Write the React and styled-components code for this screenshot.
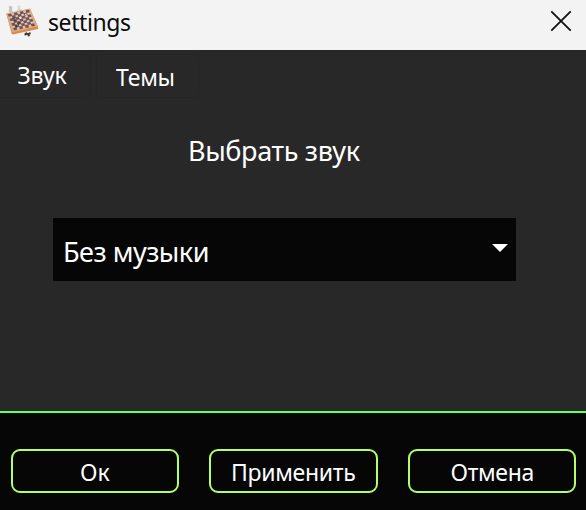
import React from 'react';
import styled, { createGlobalStyle } from 'styled-components';

const GlobalStyle = createGlobalStyle`
  * { box-sizing: border-box; }
  body { margin: 0; background: #282828; overflow: hidden; }
  button { font: inherit; color: inherit; padding: 0; border: 0; background: none; }
`;

const Window = styled.main`
  display: flex;
  flex-direction: column;
  width: 586px;
  height: 510px;
  background: #282828;
  color: #fff;
  font-family: 'Noto Sans', 'Open Sans', sans-serif;
`;

const TitleBar = styled.header`
  display: flex;
  align-items: flex-start;
  height: 50px;
  padding: 5px 14px 0 5px;
  background: #f3f3f3;
  color: #0b0b0b;
`;

const Label = styled.span`
  font-size: ${(p) => p.$size}px;
  line-height: 30px;
  letter-spacing: ${(p) => p.$spacing || 0}px;
  white-space: nowrap;
`;

const Title = styled.h1`
  flex: 1;
  display: flex;
  margin: 2px 0 0 9px;
  font-weight: 400;
`;

const CloseButton = styled.button`
  display: flex;
  margin-top: 5px;
`;

const Tabs = styled.nav`
  display: flex;
  gap: 5px;
  height: 50px;
  padding-top: 4px;
`;

const Tab = styled.button`
  display: flex;
  width: ${(p) => p.$width}px;
  height: 44px;
  padding: ${(p) => p.$top}px 0 0 ${(p) => p.$left}px;
  border: 1px solid #252525;
  border-left-width: ${(p) => (p.$first ? 0 : 1)}px;
  border-radius: ${(p) => (p.$first ? '0 5px 5px 0' : '5px')};
`;

const Content = styled.section`
  flex: 1;
  display: flex;
  flex-direction: column;
`;

const Heading = styled.h2`
  display: flex;
  height: 30px;
  margin: 36px 0 0 188px;
  font-weight: 400;
`;

const Select = styled.button`
  display: flex;
  align-items: flex-start;
  justify-content: space-between;
  width: 463px;
  height: 63px;
  margin: 52px 0 0 53px;
  padding: 19px 8px 0 10px;
  background: #060606;
`;

const Arrow = styled.svg`
  margin-top: 7px;
`;

const Footer = styled.footer`
  display: flex;
  gap: 30px;
  height: 99px;
  padding: 36px 10px 0 11px;
  border-top: 2px solid #66ff66;
  background: #060606;
`;

const ActionButton = styled.button`
  display: flex;
  width: ${(p) => p.$width}px;
  height: 44px;
  padding: 6px 0 0 ${(p) => p.$left}px;
  border: 2px solid #b3ff66;
  border-radius: 9px;
`;

const squares = [];
for (let r = 0; r < 7; r += 1) {
  for (let c = 0; c < 7; c += 1) {
    if ((r + c) % 2 === 0) squares.push([c, r]);
  }
}

function ChessIcon() {
  return (
    <svg width="34" height="34" viewBox="0 0 34 34">
      <g fill="#c4c4c3">
        <circle cx="5.5" cy="2.4" r="1.7" />
        <path d="M4.3 3h2.6l.8 4H3.5z" />
        <circle cx="14" cy="2" r="1.7" fill="#dededd" />
        <path d="M13 3h2.2l1.6 3h-5z" fill="#d5d5d4" />
      </g>
      <path d="M1.2 8.5L6.6 28.2l1 1.4L33 24V21.5L25 3.7z" fill="#d58a4e" />
      <path d="M1.2 8.5L24.8 3.4 33 21.6 7.4 27.2z" fill="#dfac82" />
      <g transform="matrix(2.95 -.64 .86 2.28 3.1 9.3)">
        <rect width="7" height="7" fill="#dcc2ae" />
        {squares.map(([x, y]) => (
          <rect key={`${x}-${y}`} x={x - 0.06} y={y - 0.06} width="1.12" height="1.12" fill="#745057" />
        ))}
      </g>
      <g fill="#38383b">
        <path d="M8 13l2-1 1 4-2 1zM13 16l2 1-1 3-2-1zM9.5 20l2-.5.8 2.9-2 .5z" opacity=".8" />
        <path d="M19.5 28.3l2-1 1.4 1 2.4-1.3.5 2-1.4.8.8 1.2-1.9.5-1.1-1.7-2.5 1z" />
      </g>
      <path d="M14 13l1.3-2 .8 3zM20 10l1-2 1 2.5z" fill="#f1eeea" />
    </svg>
  );
}

export default function App() {
  return (
    <>
      <GlobalStyle />
      <Window>
        <TitleBar>
          <ChessIcon />
          <Title><Label $size={23} $spacing={-0.4}>settings</Label></Title>
          <CloseButton aria-label="Close">
            <svg width="22" height="22" viewBox="0 0 22 22">
              <path d="M1.3 1.3L20.7 20.7M20.7 1.3L1.3 20.7" stroke="#111" strokeWidth="1.8" />
            </svg>
          </CloseButton>
        </TitleBar>
        <Tabs>
          <Tab $width={91} $left={17.5} $top={5} $first><Label $size={23} $spacing={-0.2}>Звук</Label></Tab>
          <Tab $width={103} $left={19} $top={7}><Label $size={23} $spacing={-0.2}>Темы</Label></Tab>
        </Tabs>
        <Content>
          <Heading><Label $size={27} $spacing={-0.35}>Выбрать звук</Label></Heading>
          <Select>
            <Label $size={27} $spacing={-0.5}>Без музыки</Label>
            <Arrow width="16" height="8" viewBox="0 0 16 8"><path d="M0 0h16L8 8z" fill="#fff" /></Arrow>
          </Select>
        </Content>
        <Footer>
          <ActionButton $width={168} $left={67}><Label $size={23}>Ок</Label></ActionButton>
          <ActionButton $width={169} $left={20}><Label $size={23} $spacing={-0.3}>Применить</Label></ActionButton>
          <ActionButton $width={168} $left={40.5}><Label $size={23} $spacing={-0.35}>Отмена</Label></ActionButton>
        </Footer>
      </Window>
    </>
  );
}
